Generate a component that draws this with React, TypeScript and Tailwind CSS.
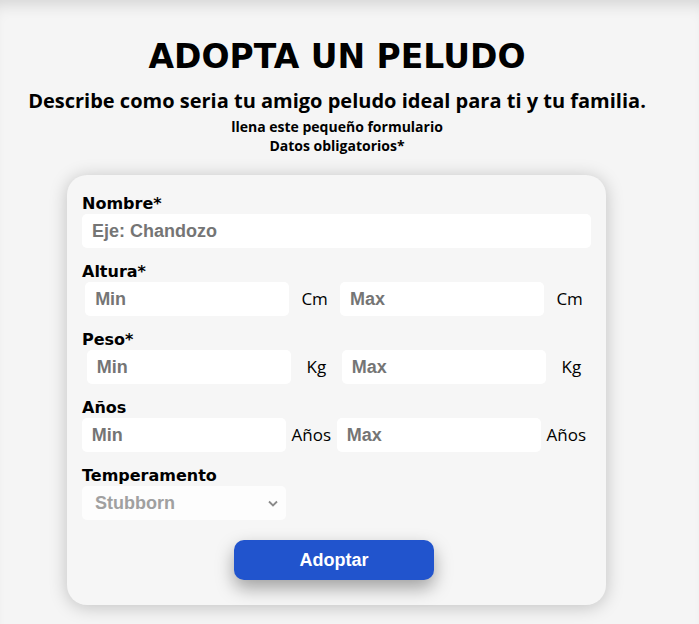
import React from 'react'

type RangeRowProps = {
  unit: string
}

function FieldLabel({ children }: { children: React.ReactNode }) {
  return (
    <label className="block pl-[3px] font-['DejaVu_Sans',sans-serif] text-[16px] font-bold leading-[21px] text-black">
      {children}
    </label>
  )
}

function RangeRow({ unit }: RangeRowProps) {
  const inputCls =
    "h-[34px] w-[204px] rounded-[5px] bg-white pl-[10px] font-['Liberation_Sans',Arial,sans-serif] text-[18px] font-bold text-black outline-none placeholder:text-[#757575]"
  const unitCls = "font-['Open_Sans',sans-serif] text-[17px] text-black"

  return (
    <div className="flex h-[34px] items-center justify-around">
      <input className={inputCls} placeholder="Min" />
      <span className={unitCls}>{unit}</span>
      <input className={inputCls} placeholder="Max" />
      <span className={unitCls}>{unit}</span>
    </div>
  )
}

export default function App() {
  return (
    <div className="min-h-screen bg-[#f5f5f5] shadow-[inset_0_14px_16px_-10px_rgba(0,0,0,0.14)]">
      <div className="w-[674px] pt-[37px] pb-[19px]">
        <h1 className="text-center font-['DejaVu_Sans',sans-serif] text-[33px] font-bold leading-[40px] text-black">
          ADOPTA UN PELUDO
        </h1>
        <h2 className="mt-[12px] text-center font-['Open_Sans',sans-serif] text-[20px] font-bold leading-[24px] text-black">
          Describe como seria tu amigo peludo ideal para ti y tu familia.
        </h2>
        <p className="mt-[4px] text-center font-['Open_Sans',sans-serif] text-[14px] font-bold leading-[19px] text-black">
          llena este pequeño formulario
        </p>
        <p className="text-center font-['Open_Sans',sans-serif] text-[14px] font-bold leading-[19px] text-black">
          Datos obligatorios*
        </p>

        <form
          className="ml-[67px] mt-[20px] w-[539px] rounded-[20px] bg-[#f6f6f6] pl-[12px] pr-[17px] pt-[18px] pb-[25px] shadow-[0_2px_18px_rgba(0,0,0,0.22)]"
          onSubmit={(e) => e.preventDefault()}
        >
          <FieldLabel>Nombre*</FieldLabel>
          <input
            className="ml-[3px] block h-[34px] w-[509px] rounded-[5px] bg-white pl-[10px] font-['Liberation_Sans',Arial,sans-serif] text-[18px] font-bold text-black outline-none placeholder:text-[#757575]"
            placeholder="Eje: Chandozo"
          />

          <div className="mt-[13px]">
            <FieldLabel>Altura*</FieldLabel>
            <RangeRow unit="Cm" />
          </div>

          <div className="mt-[13px]">
            <FieldLabel>Peso*</FieldLabel>
            <RangeRow unit="Kg" />
          </div>

          <div className="mt-[13px]">
            <FieldLabel>Años</FieldLabel>
            <RangeRow unit="Años" />
          </div>

          <div className="mt-[13px]">
            <FieldLabel>Temperamento</FieldLabel>
            <div className="relative ml-[3px] h-[34px] w-[204px]">
              <select
                className="h-[34px] w-[204px] appearance-none rounded-[5px] bg-[#fdfdfd] pl-[13px] font-['Liberation_Sans',Arial,sans-serif] text-[18px] font-bold text-[#a0a0a0] outline-none"
                defaultValue="Stubborn"
              >
                <option>Stubborn</option>
                <option>Playful</option>
                <option>Calm</option>
              </select>
              <svg
                className="pointer-events-none absolute right-[8px] top-[14px]"
                width="10"
                height="7"
                viewBox="0 0 10 7"
                fill="none"
              >
                <path d="M1 1.5 5 5.5 9 1.5" stroke="#8a8a8a" strokeWidth="1.8" />
              </svg>
            </div>
          </div>

          <div className="mt-[20px] flex justify-center">
            <button
              type="submit"
              className="h-[40px] w-[200px] rounded-[10px] bg-[#2154cd] font-['Liberation_Sans',Arial,sans-serif] text-[18px] font-bold text-white shadow-[0_8px_18px_rgba(0,0,0,0.35)]"
            >
              Adoptar
            </button>
          </div>
        </form>
      </div>
    </div>
  )
}
